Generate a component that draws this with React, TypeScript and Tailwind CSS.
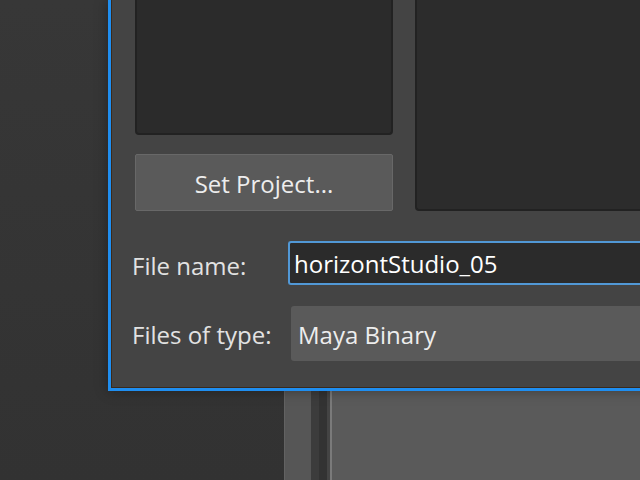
export default function App() {
  return (
    <div
      className="relative w-[640px] h-[480px] overflow-hidden bg-gradient-to-b from-[#373737] to-[#323232]"
      style={{ fontFamily: '"Open Sans", "Noto Sans", sans-serif' }}
    >
      {/* window behind the dialog */}
      <div className="absolute left-[284px] top-[370px] w-[400px] h-[120px] flex">
        <div className="w-[27px] bg-[#565656] border-l border-[#626262]" />
        <div className="w-[19px] flex">
          <div className="w-[8px] bg-[#3c3c3c]" />
          <div className="w-[8px] bg-[#333333]" />
          <div className="w-[3px] bg-[#444444]" />
        </div>
        <div className="w-[2px] bg-[#7a7a7a]" />
        <div className="flex-1 bg-[#5a5a5a]" />
      </div>

      {/* dialog */}
      <div className="absolute left-[108px] top-0 w-[560px] h-[391px] border-l-[3px] border-b-[3px] border-[#1f8ef0] bg-[#444444] shadow-[0_0_12px_rgba(0,0,0,0.35)]">
        <div className="h-full flex flex-col pl-[23px] border-l border-b border-[#3a2a1c]">
          <div className="h-[211px] grid grid-cols-[258px_1fr] gap-[22px]">
            <div className="flex flex-col gap-[19px]">
              <div className="flex-1 bg-[#2b2b2b] border-2 border-t-0 border-[#222222] rounded-b-[4px]" />
              <button className="h-[57px] bg-[#5a5a5a] border border-[#686868] rounded-[2px] text-[24px] font-medium text-[#ededed] leading-none pt-[3px]">
                Set Project...
              </button>
            </div>
            <div className="bg-[#2c2c2c] border-2 border-t-0 border-r-0 border-[#222222] rounded-bl-[4px]" />
          </div>

          <div className="mt-[30px] flex items-center">
            <div className="w-[156px] text-[24px] font-medium text-[#e2e2e2] -ml-[3px] pt-[5px]">File name:</div>
            <div className="flex-1 h-[44px] border-2 border-r-0 border-[#5198d6] rounded-l-[3px] bg-[#2b2b2b] flex items-center pl-[4px] pt-[2px]">
              <span className="text-[24px] font-medium text-white">horizontStudio_05</span>
            </div>
          </div>

          <div className="mt-[21px] flex items-center">
            <div className="w-[159px] text-[24px] font-medium text-[#e2e2e2] -ml-[3px] pt-[3px]">Files of type:</div>
            <div className="flex-1 h-[55px] bg-[#5a5a5a] rounded-l-[3px] flex items-center pl-[7px] pt-[3px]">
              <span className="text-[24px] font-medium text-[#ededed]">Maya Binary</span>
            </div>
          </div>
        </div>
      </div>
    </div>
  );
}
